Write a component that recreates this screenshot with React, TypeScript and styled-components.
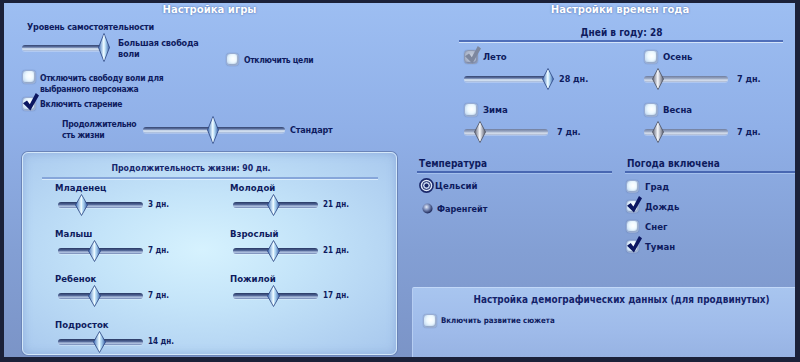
import React, { useId } from 'react';
import styled, { createGlobalStyle } from 'styled-components';

const NAVY = '#0e1b5e';

const GlobalStyle = createGlobalStyle`
  html, body { margin: 0; padding: 0; background: #1b2139; }
  * { box-sizing: border-box; }
`;

const Frame = styled.div`
  width: 800px;
  height: 362px;
  border-style: solid;
  border-color: #1b2139;
  border-width: 3px 5px 5px 4px;
  background: linear-gradient(180deg, #9dbef2 0%, #90b0e8 35%, #839fd4 70%, #7b94c7 100%);
  display: grid;
  grid-template-columns: 400px 1fr;
  font-family: "DejaVu Sans Condensed", "Liberation Sans", sans-serif;
  font-weight: bold;
  font-size: 9.5px;
  color: ${NAVY};
  overflow: hidden;
`;

const LeftCol = styled.section`
  display: flex;
  flex-direction: column;
  padding: 0 7px 2px 18px;
  min-height: 0;
  font-size: 9px;
  letter-spacing: -0.2px;
`;

const RightCol = styled.section`
  display: flex;
  flex-direction: column;
  min-height: 0;
`;

const PanelTitle = styled.h2<{ $shift?: number }>`
  margin: 0;
  height: 16px;
  line-height: 13px;
  font-size: 11.2px;
  letter-spacing: 0;
  color: #fff;
  text-align: center;
  padding-left: ${({ $shift }) => $shift ?? 0}px;
  text-shadow: 0 0 2px rgba(40, 70, 140, 0.8);
`;

const Text = styled.span<{ $size?: number; $ls?: number }>`
  line-height: 12px;
  font-size: ${({ $size }) => ($size ? `${$size}px` : 'inherit')};
  letter-spacing: ${({ $ls }) => ($ls !== undefined ? `${$ls}px` : 'inherit')};
  white-space: nowrap;
`;

const SectionLabel = styled.div<{ $indent?: number }>`
  margin: 2px 0 0 ${({ $indent }) => $indent ?? 0}px;
  line-height: 12px;
`;

const Row = styled.div<{ $top?: number; $indent?: number; $align?: string }>`
  display: flex;
  align-items: ${({ $align }) => $align ?? 'center'};
  margin-top: ${({ $top }) => $top ?? 0}px;
  padding-left: ${({ $indent }) => $indent ?? 0}px;
`;

const Lines = styled.div<{ $w?: number; $gap?: number; $pad?: number; $size?: number; $ls?: number }>`
  flex: none;
  width: ${({ $w }) => ($w ? `${$w}px` : 'auto')};
  margin-left: ${({ $gap }) => $gap ?? 0}px;
  padding-top: ${({ $pad }) => $pad ?? 0}px;
  line-height: 11px;
  white-space: nowrap;
  font-size: ${({ $size }) => ($size ? `${$size}px` : 'inherit')};
  letter-spacing: ${({ $ls }) => ($ls !== undefined ? `${$ls}px` : 'inherit')};
`;

/* ---------- checkbox ---------- */

const CheckRow = styled.div<{ $gap?: number; $top?: number; $left?: number; $align?: string }>`
  display: flex;
  align-items: ${({ $align }) => $align ?? 'center'};
  gap: ${({ $gap }) => $gap ?? 4}px;
  margin-top: ${({ $top }) => $top ?? 0}px;
  margin-left: ${({ $left }) => $left ?? 0}px;
`;

const Box = styled.span<{ $size: number; $disabled?: boolean }>`
  position: relative;
  flex: none;
  width: ${({ $size }) => $size}px;
  height: ${({ $size }) => $size}px;
  border-radius: 4px;
  border: 1px solid ${({ $disabled }) => ($disabled ? '#8d99b4' : '#98acd2')};
  background: ${({ $disabled }) =>
    $disabled
      ? 'radial-gradient(circle at 55% 45%, #c9d0de 0%, #aeb8cc 60%, #8f9ab2 100%)'
      : 'radial-gradient(circle at 55% 42%, #ffffff 0%, #eef9ff 40%, #c4dbf2 80%, #9fb8de 100%)'};
  box-shadow: inset -1px -1px 1px rgba(70, 90, 140, 0.45), 0 0 1px rgba(40, 60, 110, 0.5);
`;

const Tick = styled.svg<{ $grey?: boolean }>`
  position: absolute;
  left: 0px;
  top: -5px;
  overflow: visible;
  fill: ${({ $grey }) => ($grey ? '#7d879e' : '#0b1661')};
`;

function Checkbox({ checked, disabled, size = 14 }: { checked?: boolean; disabled?: boolean; size?: number }) {
  return (
    <Box $size={size} $disabled={disabled}>
      {checked && (
        <Tick $grey={disabled} width={size + 2} height={size + 4} viewBox="0 0 16 18">
          <path d="M0 10.2 L4 7.4 L6.8 11.2 L12.8 0 L16 2.4 L7.4 17.4 Z" />
        </Tick>
      )}
    </Box>
  );
}

/* ---------- radio ---------- */

function RadioOn() {
  return (
    <svg width="15" height="15" viewBox="0 0 15 15">
      <circle cx="7.5" cy="7.5" r="6.6" fill="#dfe8f7" stroke="#1a286a" strokeWidth="1.6" />
      <circle cx="7.5" cy="7.5" r="4" fill="#c8d6ee" stroke="#1a286a" strokeWidth="1" />
      <circle cx="7.5" cy="7.5" r="2" fill="#1a286a" />
    </svg>
  );
}

function RadioOff() {
  const id = useId();
  return (
    <svg width="11" height="11" viewBox="0 0 11 11">
      <defs>
        <radialGradient id={id} cx="40%" cy="35%" r="65%">
          <stop offset="0%" stopColor="#e4ecfa" />
          <stop offset="45%" stopColor="#7f90bc" />
          <stop offset="100%" stopColor="#1b2758" />
        </radialGradient>
      </defs>
      <circle cx="5.5" cy="5.5" r="5" fill={`url(#${id})`} />
    </svg>
  );
}

/* ---------- slider ---------- */

type TrackKind = 'light' | 'dark' | 'faded';

const SliderBox = styled.div<{ $w: number; $h: number; $left?: number }>`
  position: relative;
  flex: none;
  width: ${({ $w }) => $w}px;
  height: ${({ $h }) => $h}px;
  margin-left: ${({ $left }) => $left ?? 0}px;
  display: flex;
  align-items: center;
`;

const trackBg: Record<TrackKind, string> = {
  light: 'linear-gradient(180deg, #34446f 0%, #5f74a4 35%, #e2eef9 65%, #9fb3d6 100%)',
  dark: 'linear-gradient(180deg, #283863 0%, #4f6394 40%, #b7c9e6 70%, #6f84b2 100%)',
  faded: 'linear-gradient(180deg, #6f7d9e 0%, #98a6c2 40%, #d7e0ee 70%, #a9b6d0 100%)',
};

const Track = styled.div<{ $kind: TrackKind }>`
  width: 100%;
  height: 6px;
  border-radius: 3px;
  background: ${({ $kind }) => trackBg[$kind]};
  box-shadow: 0 1px 0 rgba(255, 255, 255, 0.25);
`;

const ThumbSvg = styled.svg`
  position: absolute;
  top: 0;
  overflow: visible;
`;

function Slider({
  width,
  value,
  kind = 'light',
  grey,
  tw = 13,
  th = 23,
  left,
}: {
  width: number;
  value: number;
  kind?: TrackKind;
  grey?: boolean;
  tw?: number;
  th?: number;
  left?: number;
}) {
  const id = useId();
  const stops = grey
    ? ['#5e6374', '#eceef4', '#c9ccd6', '#5a5f70']
    : ['#3f6cb6', '#e2f6ff', '#b6dcf6', '#3a62aa'];
  return (
    <SliderBox $w={width} $h={th} $left={left}>
      <Track $kind={kind} />
      <ThumbSvg
        width={tw}
        height={th}
        viewBox={`0 0 ${tw} ${th}`}
        style={{ left: `calc(${value}% - ${tw / 2}px)` }}
      >
        <defs>
          <linearGradient id={id} x1="0" y1="0" x2="1" y2="0">
            <stop offset="0%" stopColor={stops[0]} />
            <stop offset="45%" stopColor={stops[1]} />
            <stop offset="62%" stopColor={stops[2]} />
            <stop offset="100%" stopColor={stops[3]} />
          </linearGradient>
        </defs>
        <polygon
          points={`${tw / 2},0.5 ${tw - 0.5},${th / 2} ${tw / 2},${th - 0.5} 0.5,${th / 2}`}
          fill={`url(#${id})`}
          stroke={grey ? '#4a4f60' : '#2a4482'}
          strokeWidth="0.8"
        />
        <polyline
          points={`${tw / 2},2 ${tw / 2},${th - 2}`}
          stroke="rgba(255,255,255,0.55)"
          strokeWidth="1"
        />
      </ThumbSvg>
    </SliderBox>
  );
}

const Value = styled.span<{ $gap?: number; $size?: number }>`
  margin-left: ${({ $gap }) => $gap ?? 5}px;
  font-size: ${({ $size }) => $size ?? 9}px;
  line-height: 12px;
  white-space: nowrap;
`;

/* ---------- lifespan box ---------- */

const LifeBox = styled.div`
  flex: 1;
  margin-top: 8px;
  border: 1px solid #d4e8fa;
  border-radius: 6px;
  box-shadow: 0 0 0 1px #6a84b8, inset 0 0 8px rgba(120, 150, 205, 0.55);
  background: radial-gradient(ellipse 70% 70% at 48% 48%, #d6f2fe 0%, #c4e4f9 40%, #a9c9ee 100%);
  padding-top: 8px;
  letter-spacing: 0;
  font-size: 9.5px;
`;

const LifeTitle = styled.div`
  text-align: center;
  padding-right: 37px;
  line-height: 14px;
  font-size: 8.7px;
  color: #16266c;
`;

const Separator = styled.div<{ $left: number; $right: number; $top?: number; $color?: string }>`
  height: 2px;
  margin: ${({ $top }) => $top ?? 2}px ${({ $right }) => $right}px 0 ${({ $left }) => $left}px;
  background: ${({ $color }) => $color ?? '#86a6da'};
  box-shadow: 0 1px 0 rgba(235, 246, 255, 0.7);
`;

const LifeGrid = styled.div`
  display: grid;
  grid-template-columns: 175px 1fr;
  row-gap: 11.5px;
  padding: 3px 0 0 32px;
`;

const Stage = styled.div`
  display: flex;
  flex-direction: column;
`;

/* ---------- seasons ---------- */

const DaysTitle = styled.div`
  margin-top: 8px;
  padding-left: 44px;
  text-align: center;
  line-height: 12px;
  font-size: 10px;
`;

const SeasonGrid = styled.div`
  display: grid;
  grid-template-columns: 180px 1fr;
  row-gap: 13px;
  padding-left: 60px;
  margin-top: 8px;
`;

const Season = styled.div`
  display: flex;
  flex-direction: column;
  gap: 4px;
`;

/* ---------- temperature / weather ---------- */

const OptionsGrid = styled.div`
  display: grid;
  grid-template-columns: 195px 1fr;
  column-gap: 13px;
  padding-left: 13px;
  margin-top: 15px;
`;

const Heading = styled.div`
  padding: 0 0 1px 2px;
  line-height: 12px;
  font-size: 10px;
  border-bottom: 2px solid #4867b2;
  box-shadow: 0 1px 0 rgba(190, 215, 250, 0.5);
`;

const OptionList = styled.div<{ $top: number; $gap: number; $left?: number }>`
  display: flex;
  flex-direction: column;
  gap: ${({ $gap }) => $gap}px;
  margin-top: ${({ $top }) => $top}px;
  padding-left: ${({ $left }) => $left ?? 0}px;
`;

const RadioRow = styled.div<{ $gap?: number; $indent?: number }>`
  display: flex;
  align-items: center;
  gap: ${({ $gap }) => $gap ?? 1}px;
  padding-left: ${({ $indent }) => $indent ?? 0}px;
  height: 15px;
`;

/* ---------- demographics ---------- */

const DemoBox = styled.div`
  margin: auto 0 0 8px;
  height: 70px;
  border-top: 1px solid #c2d8f8;
  border-left: 1px solid #b6cdf2;
  border-top-left-radius: 2px;
  background: linear-gradient(180deg, #a8c5ef 0%, #9fbbea 60%, #97b3e3 100%);
  padding: 5px 0 0 10px;
`;

const DemoTitle = styled.div`
  text-align: center;
  padding-left: 25px;
  line-height: 13px;
  font-size: 9.9px;
  color: #14226a;
`;

const stages: [string, number, string][] = [
  ['Младенец', 28, '3 дн.'],
  ['Молодой', 48, '21 дн.'],
  ['Малыш', 43, '7 дн.'],
  ['Взрослый', 48, '21 дн.'],
  ['Ребенок', 43, '7 дн.'],
  ['Пожилой', 48, '17 дн.'],
  ['Подросток', 49, '14 дн.'],
];

const seasons: { name: string; on?: boolean; locked?: boolean; value: number; days: string }[] = [
  { name: 'Лето', on: true, locked: true, value: 100, days: '28 дн.' },
  { name: 'Осень', value: 17, days: '7 дн.' },
  { name: 'Зима', value: 19, days: '7 дн.' },
  { name: 'Весна', value: 17, days: '7 дн.' },
];

const weather: [string, boolean][] = [
  ['Град', false],
  ['Дождь', true],
  ['Снег', false],
  ['Туман', true],
];

export default function App() {
  return (
    <>
      <GlobalStyle />
      <Frame>
        <LeftCol>
          <PanelTitle>Настройка игры</PanelTitle>
          <SectionLabel $indent={5}>Уровень самостоятельности</SectionLabel>
          <Row $align="flex-start">
            <Slider width={87} value={94} th={29} tw={12} />
            <Lines $w={100} $gap={9} $pad={5} $size={9}>
              <div>Большая свобода</div>
              <div>воли</div>
            </Lines>
            <CheckRow $top={20} $left={8} $gap={5}>
              <Checkbox size={13} />
              <Text $size={8.5} $ls={-0.3}>Отключить цели</Text>
            </CheckRow>
          </Row>
          <CheckRow $top={4} $align="flex-start">
            <Checkbox />
            <Lines $pad={3} $size={8.5} $ls={-0.3}>
              <div>Отключить свободу воли для</div>
              <div>выбранного персонажа</div>
            </Lines>
          </CheckRow>
          <CheckRow $top={2}>
            <Checkbox checked />
            <Text $size={8.5} $ls={-0.3}>Включить старение</Text>
          </CheckRow>
          <Row $top={5} $indent={40}>
            <Lines $w={81} $size={8.6} $ls={-0.3}>
              <div>Продолжительно</div>
              <div>сть жизни</div>
            </Lines>
            <Slider width={142} value={49} th={28} tw={12} />
            <Value $gap={5}>
              <Text>Стандарт</Text>
            </Value>
          </Row>
          <LifeBox>
            <LifeTitle>Продолжительность жизни: 90 дн.</LifeTitle>
            <Separator $left={19} $right={18} />
            <LifeGrid>
              {stages.map(([name, v, d]) => (
                <Stage key={name}>
                  <Text>{name}</Text>
                  <Row>
                    <Slider width={85} value={v} kind="dark" left={3} th={22} />
                    <Value $size={8}>{d}</Value>
                  </Row>
                </Stage>
              ))}
            </LifeGrid>
          </LifeBox>
        </LeftCol>

        <RightCol>
          <PanelTitle $shift={41}>Настройки времен года</PanelTitle>
          <DaysTitle>Дней в году: 28</DaysTitle>
          <Separator $left={55} $right={12} $top={1} $color="#4f6fba" />
          <SeasonGrid>
            {seasons.map((s) => (
              <Season key={s.name}>
                <CheckRow $gap={5}>
                  <Checkbox checked={s.on} disabled={s.locked} />
                  <Text>{s.name}</Text>
                </CheckRow>
                <Row>
                  <Slider width={84} value={s.value} kind={s.on ? 'light' : 'faded'} grey={!s.on} th={22} tw={12} />
                  <Value $gap={s.on ? 11 : 9}>{s.days}</Value>
                </Row>
              </Season>
            ))}
          </SeasonGrid>
          <OptionsGrid>
            <div>
              <Heading>Температура</Heading>
              <OptionList $top={5} $gap={8} $left={2}>
                <RadioRow>
                  <RadioOn />
                  <Text>Цельсий</Text>
                </RadioRow>
                <RadioRow $indent={3} $gap={4}>
                  <RadioOff />
                  <Text $size={9}>Фаренгейт</Text>
                </RadioRow>
              </OptionList>
            </div>
            <div>
              <Heading>Погода включена</Heading>
              <OptionList $top={7} $gap={7} $left={1}>
                {weather.map(([w, on]) => (
                  <CheckRow key={w} $gap={6}>
                    <Checkbox checked={on} size={13} />
                    <Text>{w}</Text>
                  </CheckRow>
                ))}
              </OptionList>
            </div>
          </OptionsGrid>
          <DemoBox>
            <DemoTitle>Настройка демографических данных (для продвинутых)</DemoTitle>
            <CheckRow $top={8} $gap={4}>
              <Checkbox />
              <Text $size={7.8}>Включить развитие сюжета</Text>
            </CheckRow>
          </DemoBox>
        </RightCol>
      </Frame>
    </>
  );
}
